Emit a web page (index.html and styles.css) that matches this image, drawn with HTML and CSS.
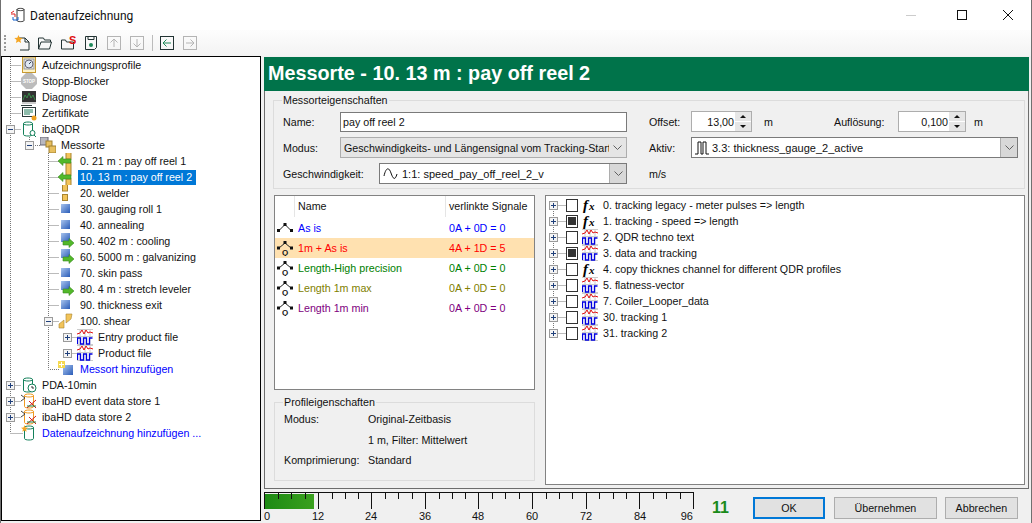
FILE: index.html
```html
<!DOCTYPE html>
<html lang="de">
<head>
  <meta charset="UTF-8" />
  <title>Datenaufzeichnung</title>
  <link rel="stylesheet" href="styles.css">
</head>
<body>
  <!-- shared icons -->
  <svg class="defs" width="0" height="0">
    <symbol id="i-app" viewBox="0 0 16 16"><path d="M7 2.500c0-1.500 7-1.500 7 0v11c0 1.500-7 1.500-7 0zM7 2.500c0 1.500 7 1.500 7 0" fill="#fff" stroke="#333"/><path d="M1 7h4v3M1 6l3-2" fill="none" stroke="#e02020"/><path d="M3 10v3h5v-3" fill="none" stroke="#1060d0"/></symbol>
    <symbol id="i-profile" viewBox="0 0 16 16"><rect x="1.500" y="0" width="13" height="15.500" fill="#fdf3c8" stroke="#c89a30"/><rect x="3" y="2" width="10" height="10" fill="#e6e6e6" stroke="#999"/><circle cx="8" cy="7" r="4" fill="#dfe8f4" stroke="#667"/><path d="M8 7l2-2" stroke="#345"/></symbol>
    <symbol id="i-stop" viewBox="0 0 16 16"><path d="M5 0h6l5 5v6l-5 5H5L0 11V5z" fill="#bcbcbc"/></symbol>
    <symbol id="i-diag" viewBox="0 0 16 16"><rect x="1" y="2" width="14" height="11" fill="#333"/><path d="M2 11l2-5 2 3 2-5 2 5 2-3 2 5" fill="none" stroke="#3a8a4a"/><path d="M1 14h14" stroke="#999"/></symbol>
    <symbol id="i-cert" viewBox="0 0 16 16"><rect x="1.500" y="2.500" width="13" height="9" fill="#fff" stroke="#2b3a3a"/><path d="M3 5h9M3 7h9M3 9h6" stroke="#1f7a5a"/><path d="M0 .5h11" stroke="#2b3a3a"/><circle cx="13" cy="13" r="2.500" fill="#f0a020"/></symbol>
    <symbol id="i-store-q" viewBox="0 0 16 16"><path d="M2.500 2.500c0-2 9-2 9 0v11c0 2-9 2-9 0zM2.500 2.500c0 2 9 2 9 0" fill="#fff" stroke="#13805a"/><circle cx="11.500" cy="12" r="2.500" fill="#fff" stroke="#13805a"/><path d="M13 14l2 2" stroke="#13805a"/></symbol>
    <symbol id="i-store-clock" viewBox="0 0 16 16"><path d="M2.500 2.500c0-2 9-2 9 0v11c0 2-9 2-9 0zM2.500 2.500c0 2 9 2 9 0" fill="#fff" stroke="#13805a"/><circle cx="11" cy="11" r="4" fill="#fff" stroke="#13805a"/><path d="M11 9v2h2" fill="none" stroke="#333"/></symbol>
    <symbol id="i-store-x" viewBox="0 0 16 16"><path d="M3.500 2.500c0-2 9-2 9 0v11c0 2-9 2-9 0zM3.500 2.500c0 2 9 2 9 0" fill="#fff" stroke="#f09a20"/><path d="M0 2l4 3-4 3" fill="none" stroke="#444"/><path d="M6 15l9-8M8 8l7 7" stroke="#d02020"/><path d="M6 13h9" stroke="#208040"/></symbol>
    <symbol id="i-store-add" viewBox="0 0 16 16"><path d="M3.500 2.500c0-2 9-2 9 0v11c0 2-9 2-9 0zM3.500 2.500c0 2 9 2 9 0" fill="#fff" stroke="#13805a"/><path d="M3.500 0l1 2.500 2.500.2-2 1.600.700 2.500-2.200-1.400-2.200 1.400.700-2.500-2-1.600 2.500-.2z" fill="#f5a623"/></symbol>
    <symbol id="i-group" viewBox="0 0 16 16"><rect x="0" y="0" width="8" height="8" fill="#b8b8c0" stroke="#667"/><rect x="6" y="4" width="6" height="6" fill="#e8c060" stroke="#a08030"/><rect x="9" y="9" width="7" height="7" fill="#e8c060" stroke="#a08030"/></symbol>
    <symbol id="i-in" viewBox="0 0 16 16"><rect x="8" y="-1" width="5" height="7" fill="#f2c45a" stroke="#a88430"/><rect x="8" y="10" width="5" height="7" fill="#f2c45a" stroke="#a88430"/><path d="M0 8l5-4.500v2.500h8v4H5v2.500z" fill="#52b82a" stroke="#3a8a20" stroke-width=".6"/></symbol>
    <symbol id="i-weld" viewBox="0 0 16 16"><rect x="4.500" y="-1" width="5" height="7" fill="#f2c45a" stroke="#a88430"/><rect x="4.500" y="9.500" width="5" height="6" fill="#f2c45a" stroke="#a88430"/></symbol>
    <symbol id="i-box" viewBox="0 0 16 16"><defs><linearGradient id="g-box" x2="1" y2="1"><stop offset="0" stop-color="#a8c4ee"/><stop offset="1" stop-color="#2a5cb8"/></linearGradient></defs><rect x="3" y="3" width="9" height="9" fill="url(#g-box)"/></symbol>
    <symbol id="i-out" viewBox="0 0 16 16"><rect x="3" y="0" width="9" height="9" fill="url(#g-box)"/><path d="M16 10l-5-4.500v2.500H5v4h6v2.500z" fill="#52b82a" stroke="#3a8a20" stroke-width=".6"/></symbol>
    <symbol id="i-shear" viewBox="0 0 16 16"><path d="M8 1h6l-1 5-5 4z" fill="#f2c45a" stroke="#a88430" stroke-width=".6"/><path d="M1 15V11l5-4v8z" fill="#f2c45a" stroke="#a88430" stroke-width=".6"/></symbol>
    <symbol id="i-signal" viewBox="0 0 16 16"><path d="M0 .5h16M0 7.500h16M0 15.500h16M3 0v16M8 0v16M13 0v16" stroke="#ccc"/><path d="M0 5l3-1 2-3 2 4 2-4 2 3 2-1 3 1" fill="none" stroke="#e01010"/><path d="M.5 15V9h3v6h3V9h3v6h3V9h3" fill="none" stroke="#0000e0" stroke-width="1.300"/></symbol>
    <symbol id="i-add" viewBox="0 0 16 16"><rect x="5" y="4" width="10" height="10" fill="url(#g-box)"/><path d="M0 0h7v7H0z" fill="#f5d950"/><path d="M1 3.500h5M3.500 1v5" stroke="#fff"/></symbol>
    <symbol id="i-node" viewBox="0 0 16 16"><path d="M2 10.500l6-6 6 6" fill="none" stroke="#222"/><rect x="0" y="9" width="3" height="3" fill="#111"/><rect x="6.500" y="3" width="3" height="3" fill="#111"/><rect x="13" y="9" width="3" height="3" fill="#111"/></symbol>
    <symbol id="i-node-q" viewBox="0 0 16 16"><path d="M2 8l6-5 6 5" fill="none" stroke="#222"/><rect x="0" y="6.500" width="3" height="3" fill="#111"/><rect x="6.500" y="1" width="3" height="3" fill="#111"/><rect x="13" y="6.500" width="3" height="3" fill="#111"/></symbol>
    <symbol id="i-plus" viewBox="0 0 9 9"><rect x=".5" y=".5" width="8" height="8" fill="#f4f4f4" stroke="#9a9a9a"/><path d="M2 4.500h5M4.500 2v5" stroke="#1f3f7a"/></symbol>
    <symbol id="i-minus" viewBox="0 0 9 9"><rect x=".5" y=".5" width="8" height="8" fill="#f4f4f4" stroke="#9a9a9a"/><path d="M2 4.500h5" stroke="#1f3f7a"/></symbol>
    <symbol id="i-chev" viewBox="0 0 9 5"><path d="M.5.500l4 4 4-4" fill="none" stroke="#606060"/></symbol>
  </svg>

  <div class="window">
    <header class="titlebar">
      <svg class="titlebar__icon" width="16" height="16"><use href="#i-app"/></svg>
      <span class="titlebar__text">Datenaufzeichnung</span>
      <div class="titlebar__controls">
        <svg width="10" height="10"><path d="M0 5.500h10" stroke="#ccc"/></svg>
        <svg width="10" height="10"><rect x=".5" y=".5" width="9" height="9" fill="none" stroke="#111"/></svg>
        <svg width="10" height="10"><path d="M0 0l10 10M10 0L0 10" stroke="#111"/></svg>
      </div>
    </header>

    <div class="toolbar">
      <span class="toolbar__grip"></span>
      <svg class="tool" width="16" height="16" viewBox="0 0 16 16"><path d="M5 3h6l4 4v8H6" fill="none" stroke="#233"/><path d="M11 3v4h4" fill="none" stroke="#233"/><path d="M4.500 0l1.200 2.800 3 .2-2.300 2 .7 3-2.600-1.600L1.900 8l.7-3L.3 3l3-.2z" fill="#f5a623"/></svg>
      <svg class="tool" width="16" height="16" viewBox="0 0 16 16"><path d="M1.500 14V3h5l1 2h6v2M1.500 14h11l2-7H4z" fill="none" stroke="#233"/></svg>
      <svg class="tool" width="16" height="16" viewBox="0 0 16 16"><path d="M1.500 14V5h4l1 2h7v7z" fill="none" stroke="#233"/><text x="9" y="9" class="tool__s">S</text></svg>
      <svg class="tool" width="16" height="16" viewBox="0 0 16 16"><path d="M2.500 1.500h11v11l-2 2h-9z" fill="none" stroke="#233"/><path d="M5 1.500v3h6v-3" fill="none" stroke="#233"/><circle cx="8" cy="10" r="2" fill="#1f8a5a"/></svg>
      <svg class="tool" width="16" height="16" viewBox="0 0 16 16"><rect x="1.500" y="1.500" width="13" height="13" fill="none" stroke="#b4b4b4"/><path d="M8 12V4M4.500 7.500L8 4l3.500 3.500" fill="none" stroke="#b4b4b4"/></svg>
      <svg class="tool" width="16" height="16" viewBox="0 0 16 16"><rect x="1.500" y="1.500" width="13" height="13" fill="none" stroke="#b4b4b4"/><path d="M8 4v8M4.500 8.500L8 12l3.500-3.500" fill="none" stroke="#b4b4b4"/></svg>
      <span class="toolbar__sep"></span>
      <svg class="tool" width="16" height="16" viewBox="0 0 16 16"><rect x="1.500" y="1.500" width="13" height="13" fill="none" stroke="#233"/><path d="M12 8H4M7.500 4.500L4 8l3.500 3.500" fill="none" stroke="#1f8a5a"/></svg>
      <svg class="tool" width="16" height="16" viewBox="0 0 16 16"><rect x="1.500" y="1.500" width="13" height="13" fill="none" stroke="#b4b4b4"/><path d="M4 8h8M8.500 4.500L12 8l-3.500 3.500" fill="none" stroke="#b4b4b4"/></svg>
    </div>

    <div class="main">
      <nav class="tree">
        <!-- dotted connectors and expanders, in page coordinates -->
        <svg class="tree__lines" width="258" height="464" viewBox="2 57 258 464">
          <path class="dots" d="M10.500 57V433M10.500 65.500H21M10.500 81.500H21M10.500 97.500H21M10.500 113.500H21M10.500 129.500H21M10.500 385.500H21M10.500 401.500H21M10.500 417.500H21M10.500 433.500H23M29.500 137V145.500H41M48.500 153V369.500H59M48.500 161.500H59M48.500 177.500H59M48.500 193.500H59M48.500 209.500H59M48.500 225.500H59M48.500 241.500H59M48.500 257.500H59M48.500 273.500H59M48.500 289.500H59M48.500 305.500H59M48.500 321.500H59M67.500 337.500H78M67.500 353.500H78"/>
          <use href="#i-minus" x="6" y="125" width="9" height="9"/>
          <use href="#i-minus" x="25" y="141" width="9" height="9"/>
          <use href="#i-minus" x="44" y="317" width="9" height="9"/>
          <use href="#i-plus" x="63" y="333" width="9" height="9"/>
          <use href="#i-plus" x="63" y="349" width="9" height="9"/>
          <use href="#i-plus" x="6" y="381" width="9" height="9"/>
          <use href="#i-plus" x="6" y="397" width="9" height="9"/>
          <use href="#i-plus" x="6" y="413" width="9" height="9"/>
        </svg>
        <div class="node lv0"><svg class="ico"><use href="#i-profile"/></svg><span class="node__text">Aufzeichnungsprofile</span></div>
        <div class="node lv0"><svg class="ico" viewBox="0 0 16 16"><use href="#i-stop" width="16" height="16"/><text x="8" y="10" text-anchor="middle" class="i-stop-text">STOP</text></svg><span class="node__text">Stopp-Blocker</span></div>
        <div class="node lv0"><svg class="ico"><use href="#i-diag"/></svg><span class="node__text">Diagnose</span></div>
        <div class="node lv0"><svg class="ico"><use href="#i-cert"/></svg><span class="node__text">Zertifikate</span></div>
        <div class="node lv0"><svg class="ico"><use href="#i-store-q"/></svg><span class="node__text">ibaQDR</span></div>
        <div class="node lv1"><svg class="ico"><use href="#i-group"/></svg><span class="node__text">Messorte</span></div>
        <div class="node lv2"><svg class="ico"><use href="#i-in"/></svg><span class="node__text">0. 21 m : pay off reel 1</span></div>
        <div class="node lv2"><svg class="ico"><use href="#i-in"/></svg><span class="node__text node__text--sel">10. 13 m : pay off reel 2</span></div>
        <div class="node lv2"><svg class="ico"><use href="#i-weld"/></svg><span class="node__text">20. welder</span></div>
        <div class="node lv2"><svg class="ico"><use href="#i-box"/></svg><span class="node__text">30. gauging roll 1</span></div>
        <div class="node lv2"><svg class="ico"><use href="#i-box"/></svg><span class="node__text">40. annealing</span></div>
        <div class="node lv2"><svg class="ico"><use href="#i-out"/></svg><span class="node__text">50. 402 m : cooling</span></div>
        <div class="node lv2"><svg class="ico"><use href="#i-out"/></svg><span class="node__text">60. 5000 m : galvanizing</span></div>
        <div class="node lv2"><svg class="ico"><use href="#i-box"/></svg><span class="node__text">70. skin pass</span></div>
        <div class="node lv2"><svg class="ico"><use href="#i-out"/></svg><span class="node__text">80. 4 m : stretch leveler</span></div>
        <div class="node lv2"><svg class="ico"><use href="#i-box"/></svg><span class="node__text">90. thickness exit</span></div>
        <div class="node lv2"><svg class="ico"><use href="#i-shear"/></svg><span class="node__text">100. shear</span></div>
        <div class="node lv3"><svg class="ico"><use href="#i-signal"/></svg><span class="node__text">Entry product file</span></div>
        <div class="node lv3"><svg class="ico"><use href="#i-signal"/></svg><span class="node__text">Product file</span></div>
        <div class="node lv2"><svg class="ico"><use href="#i-add"/></svg><span class="node__text node__text--link">Messort hinzufügen</span></div>
        <div class="node lv0"><svg class="ico"><use href="#i-store-clock"/></svg><span class="node__text">PDA-10min</span></div>
        <div class="node lv0"><svg class="ico"><use href="#i-store-x"/></svg><span class="node__text">ibaHD event data store 1</span></div>
        <div class="node lv0"><svg class="ico"><use href="#i-store-x"/></svg><span class="node__text">ibaHD data store 2</span></div>
        <div class="node lv0"><svg class="ico"><use href="#i-store-add"/></svg><span class="node__text node__text--link">Datenaufzeichnung hinzufügen ...</span></div>
      </nav>

      <div class="side">
        <section class="panel">
          <h1 class="panel__title">Messorte - 10. 13 m : pay off reel 2</h1>
          <div class="panel__body">
            <fieldset class="group group--place">
              <legend>Messorteigenschaften</legend>
              <div class="form-row">
                <label class="lbl lbl--name">Name:</label>
                <input class="field field--name" type="text" value="pay off reel 2">
                <label class="lbl lbl--offset">Offset:</label>
                <div class="spin spin--offset"><input class="spin__val" type="text" value="13,00"><span class="spin__btns"><i class="up"></i><i class="down"></i></span></div>
                <span class="unit unit--offset">m</span>
                <label class="lbl lbl--res">Auflösung:</label>
                <div class="spin spin--res"><input class="spin__val" type="text" value="0,100"><span class="spin__btns"><i class="up"></i><i class="down"></i></span></div>
                <span class="unit unit--res">m</span>
              </div>
              <div class="form-row">
                <label class="lbl lbl--name">Modus:</label>
                <div class="combo combo--flat combo--modus"><span class="combo__text">Geschwindigkeits- und Längensignal vom Tracking-Start</span><span class="combo__btn"><svg width="9" height="5"><use href="#i-chev"/></svg></span></div>
                <label class="lbl lbl--offset">Aktiv:</label>
                <div class="combo combo--aktiv"><svg class="combo__sig" width="14" height="14" viewBox="0 0 14 14"><path d="M0 13h3V1h3v12h2V1h3v12h3" fill="none" stroke="#111"/></svg><span class="combo__text">3.3: thickness_gauge_2_active</span><span class="combo__btn"><svg width="9" height="5"><use href="#i-chev"/></svg></span></div>
              </div>
              <div class="form-row">
                <label class="lbl lbl--speed">Geschwindigkeit:</label>
                <div class="combo combo--speed"><svg class="combo__sig" width="16" height="14" viewBox="0 0 16 14"><path d="M1 9C3 0 6 0 8 6s4 8 6 1" fill="none" stroke="#111"/></svg><span class="combo__text">1:1: speed_pay_off_reel_2_v</span><span class="combo__btn"><svg width="9" height="5"><use href="#i-chev"/></svg></span></div>
                <span class="unit unit--speed">m/s</span>
              </div>
            </fieldset>

            <div class="columns">
              <div class="col-left">
                <div class="list">
                  <div class="list__head"><span class="list__c0"></span><span class="list__c1">Name</span><span class="list__c2">verlinkte Signale</span></div>
                  <div class="list__row c-blue"><svg class="ico"><use href="#i-node"/></svg><span class="list__c1">As is</span><span class="list__c2">0A + 0D = 0</span></div>
                  <div class="list__row list__row--on c-red"><svg class="ico" viewBox="0 0 16 16"><use href="#i-node-q" width="16" height="16"/><text x="8" y="14.500" text-anchor="middle" class="i-node-text">Q</text></svg><span class="list__c1">1m + As is</span><span class="list__c2">4A + 1D = 5</span></div>
                  <div class="list__row c-green"><svg class="ico" viewBox="0 0 16 16"><use href="#i-node-q" width="16" height="16"/><text x="8" y="14.500" text-anchor="middle" class="i-node-text">Q</text></svg><span class="list__c1">Length-High precision</span><span class="list__c2">0A + 0D = 0</span></div>
                  <div class="list__row c-olive"><svg class="ico" viewBox="0 0 16 16"><use href="#i-node-q" width="16" height="16"/><text x="8" y="14.500" text-anchor="middle" class="i-node-text">Q</text></svg><span class="list__c1">Length 1m max</span><span class="list__c2">0A + 0D = 0</span></div>
                  <div class="list__row c-purple"><svg class="ico" viewBox="0 0 16 16"><use href="#i-node-q" width="16" height="16"/><text x="8" y="14.500" text-anchor="middle" class="i-node-text">Q</text></svg><span class="list__c1">Length 1m min</span><span class="list__c2">0A + 0D = 0</span></div>
                </div>
                <fieldset class="group group--profile">
                  <legend>Profileigenschaften</legend>
                  <div class="prop prop--first"><span class="prop__k">Modus:</span><span>Original-Zeitbasis</span></div>
                  <div class="prop"><span class="prop__k"></span><span>1 m, Filter: Mittelwert</span></div>
                  <div class="prop prop--last"><span class="prop__k">Komprimierung:</span><span>Standard</span></div>
                </fieldset>
              </div>

              <div class="signals">
                <svg class="signals__lines" width="20" height="160" viewBox="0 0 20 160">
                  <path class="dots" d="M7.500 10V138M7.500 10.500H20M7.500 26.500H20M7.500 42.500H20M7.500 58.500H20M7.500 74.500H20M7.500 90.500H20M7.500 106.500H20M7.500 122.500H20M7.500 138.500H20"/>
                  <use href="#i-plus" x="3" y="6" width="9" height="9"/><use href="#i-plus" x="3" y="22" width="9" height="9"/><use href="#i-plus" x="3" y="38" width="9" height="9"/><use href="#i-plus" x="3" y="54" width="9" height="9"/><use href="#i-plus" x="3" y="70" width="9" height="9"/><use href="#i-plus" x="3" y="86" width="9" height="9"/><use href="#i-plus" x="3" y="102" width="9" height="9"/><use href="#i-plus" x="3" y="118" width="9" height="9"/><use href="#i-plus" x="3" y="134" width="9" height="9"/>
                </svg>
                <div class="sig"><i class="check"></i><svg class="ico" viewBox="0 0 16 16"><text x="1" y="13" class="i-fx-f">f</text><text x="7" y="13" class="i-fx-x">x</text></svg><span>0. tracking legacy - meter pulses =&gt; length</span></div>
                <div class="sig"><i class="check check--on"></i><svg class="ico" viewBox="0 0 16 16"><text x="1" y="13" class="i-fx-f">f</text><text x="7" y="13" class="i-fx-x">x</text></svg><span>1. tracking - speed =&gt; length</span></div>
                <div class="sig"><i class="check"></i><svg class="ico"><use href="#i-signal"/></svg><span>2. QDR techno text</span></div>
                <div class="sig"><i class="check check--on"></i><svg class="ico"><use href="#i-signal"/></svg><span>3. data and tracking</span></div>
                <div class="sig"><i class="check"></i><svg class="ico" viewBox="0 0 16 16"><text x="1" y="13" class="i-fx-f">f</text><text x="7" y="13" class="i-fx-x">x</text></svg><span>4. copy thicknes channel for different QDR profiles</span></div>
                <div class="sig"><i class="check"></i><svg class="ico"><use href="#i-signal"/></svg><span>5. flatness-vector</span></div>
                <div class="sig"><i class="check"></i><svg class="ico"><use href="#i-signal"/></svg><span>7. Coiler_Looper_data</span></div>
                <div class="sig"><i class="check"></i><svg class="ico"><use href="#i-signal"/></svg><span>30. tracking 1</span></div>
                <div class="sig"><i class="check"></i><svg class="ico"><use href="#i-signal"/></svg><span>31. tracking 2</span></div>
              </div>
            </div>
          </div>
        </section>

        <footer class="footer">
          <svg class="meter" width="434" height="33" viewBox="264 490 434 33">
            <defs><linearGradient id="g-meter"><stop offset="0" stop-color="#1c8a14"/><stop offset="1" stop-color="#3aa01e"/></linearGradient></defs>
            <rect x="264" y="494" width="50" height="15" fill="url(#g-meter)"/>
            <path class="meter__ticks" d="M264 492.500H693M264.500 492V509M278.500 493V499M291.500 493V499M305.500 493V499M318.500 492V509M332.500 493V499M345.500 493V499M358.500 493V499M371.500 492V509M385.500 493V499M398.500 493V499M412.500 493V499M425.500 492V509M439.500 493V499M452.500 493V499M465.500 493V499M478.500 492V509M492.500 493V499M505.500 493V499M519.500 493V499M532.500 492V509M546.500 493V499M559.500 493V499M572.500 493V499M586.500 492V509M599.500 493V499M613.500 493V499M626.500 493V499M639.500 492V509M653.500 493V499M666.500 493V499M680.500 493V499M693.500 492V509"/>
            <text x="264" y="520" class="meter__num">0</text>
            <text x="318" y="520" text-anchor="middle" class="meter__num">12</text>
            <text x="371" y="520" text-anchor="middle" class="meter__num">24</text>
            <text x="425" y="520" text-anchor="middle" class="meter__num">36</text>
            <text x="478" y="520" text-anchor="middle" class="meter__num">48</text>
            <text x="532" y="520" text-anchor="middle" class="meter__num">60</text>
            <text x="586" y="520" text-anchor="middle" class="meter__num">72</text>
            <text x="640" y="520" text-anchor="middle" class="meter__num">84</text>
            <text x="693" y="520" text-anchor="end" class="meter__num">96</text>
          </svg>
          <span class="count">11</span>
          <button class="btn btn--ok">OK</button>
          <button class="btn btn--apply">Übernehmen</button>
          <button class="btn btn--cancel">Abbrechen</button>
        </footer>
      </div>
    </div>
  </div>
</body>
</html>
```

FILE: styles.css
```css
*{margin:0;padding:0;box-sizing:border-box;}
html,body{width:1032px;height:523px;overflow:hidden;}
body{font-family:"Liberation Sans",Arial,sans-serif;font-size:10.700px;color:#111;background:#f0f0f0;}
.defs{position:absolute;}
.window{height:523px;display:flex;flex-direction:column;border:solid #707070;border-width:0 1px;}

/* title + toolbar */
.titlebar{height:30px;background:#fff;display:flex;align-items:center;padding-left:9px;flex:none;}
.titlebar__icon{flex:none;}
.titlebar__text{margin:1px 0 0 4px;font:12px Roboto,sans-serif;}
.titlebar__controls{margin-left:auto;display:flex;gap:41px;padding-right:18px;}
.titlebar__controls svg:last-child{margin-left:-5px;}
.toolbar{height:26px;flex:none;display:flex;align-items:center;padding-left:3px;background:linear-gradient(#fdfdfd,#f3f3f3);}
.toolbar__grip{width:2px;height:16px;margin-right:8px;border-left:2px dotted #999;}
.tool{margin-right:7px;flex:none;}
.tool__s{font:bold 11px "Liberation Sans",sans-serif;fill:#e01010;}
.toolbar__sep{width:1px;height:16px;background:#bbb;margin:0 6px 0 0;}

.main{flex:1;display:flex;min-height:0;}
.dots{fill:none;stroke:#777;stroke-dasharray:1 1;}

/* left tree */
.tree{width:260px;flex:none;background:#fff;border:1px solid #000;height:465px;position:relative;}
.tree__lines{position:absolute;left:0;top:0;}
.node{height:16px;display:flex;align-items:center;position:relative;white-space:nowrap;}
.ico{width:16px;height:16px;flex:none;}
.lv0{padding-left:19px;}
.lv1{padding-left:38px;}
.lv2{padding-left:56px;}
.lv3{padding-left:75px;}
.lv0 .ico{margin-right:3px;}
.lv1 .ico{margin-right:3px;}
.lv2 .ico{margin-right:4px;}
.lv3 .ico{margin-right:3px;}
.node__text{padding:0 2px;line-height:15px;}
.node__text--sel{background:#0078d7;color:#fff;width:118px;}
.node__text--link{color:#0000ff;}
.i-stop-text{font:bold 4.500px "Liberation Sans",sans-serif;fill:#fff;}
.i-fx-f{font:italic bold 15px "Liberation Serif",serif;fill:#000;}
.i-fx-x{font:italic bold 11px "Liberation Serif",serif;fill:#000;}
.i-node-text{font:bold 8px "Liberation Sans",sans-serif;fill:#111;}

/* right panel */
.side{flex:1;display:flex;flex-direction:column;min-width:0;padding-left:3px;}
.panel{height:432px;margin-right:2px;border:1px solid #6d6d6d;border-top:0;margin-top:1px;flex:none;}
.panel__title{height:34px;background:#00734a;color:#fff;font:bold 19.800px/33px "Liberation Sans",sans-serif;padding-left:4px;margin-left:-1px;margin-right:-1px;}
.panel__body{padding:0 3px 0 8px;}

.group{border:1px solid #dcdcdc;}
.group legend{margin-left:-1px;padding:0 1px;line-height:13px;}
.group--place{height:95px;margin-top:3px;padding:4px 0 0 9px;}
.form-row{display:flex;align-items:center;margin-bottom:5px;height:21px;}
.lbl{flex:none;}
.lbl--name{width:57px;}
.lbl--offset{width:42px;margin-left:22px;}
.lbl--speed{width:96px;}
.lbl--res{width:64px;}
.field{height:20px;border:1px solid #7a7a7a;background:#fff;font:inherit;color:inherit;padding-left:2px;outline:none;}
.field--name{width:287px;}
.spin{height:21px;border:1px solid #adadad;background:#fff;display:flex;}
.spin--offset{width:61px;}
.spin--res{width:68px;}
.spin__val{flex:1;width:0;border:0;outline:none;background:none;font:inherit;color:inherit;text-align:right;padding-right:1px;}
.spin__btns{width:16px;display:flex;flex-direction:column;gap:1px;}
.spin__btns i{flex:1;background:#e6e6e6;position:relative;}
.spin__btns i::after{content:"";position:absolute;left:5px;border:3px solid transparent;border-top:0;border-bottom:3px solid #111;top:3px;}
.spin__btns i.down::after{transform:scaleY(-1);}
.unit{margin-left:12px;}
.unit--offset{width:70px;flex:none;}
.unit--res{margin-left:8px;}
.unit--speed{margin-left:22px;}
.combo{height:21px;border:1px solid #7a7a7a;background:#fff;display:flex;align-items:center;overflow:hidden;}
.combo__sig{margin-left:3px;flex:none;}
.combo__text{flex:1;min-width:0;white-space:nowrap;overflow:hidden;padding-left:3px;}
.combo__btn{width:17px;height:100%;flex:none;background:#d8d8d8;border-left:1px solid #adadad;display:flex;align-items:center;justify-content:center;}
.combo--flat{background:#e5e5e5;border-color:#adadad;}
.combo--flat .combo__btn{background:none;border:0;}
.combo--modus{width:287px;}
.combo--aktiv{width:327px;font-size:11px;}
.combo--speed{width:248px;font-size:11px;}

.columns{display:flex;gap:10px;margin-top:6px;}
.col-left{width:261px;flex:none;margin-left:1px;}
.list{height:195px;background:#fff;border:1px solid #828282;}
.list__head{height:22px;display:flex;align-items:flex-start;}
.list__head .list__c0{width:20px;height:21px;flex:none;border-right:1px solid #e5e5e5;}
.list__head .list__c1{padding-left:3px;width:151px;height:21px;line-height:21px;border-right:1px solid #e5e5e5;}
.list__head .list__c2{padding-left:3px;line-height:21px;white-space:nowrap;}
.list__row{height:20px;display:flex;align-items:center;padding-left:2px;}
.list__row .ico{margin-right:5px;}
.list__row .list__c1{width:151px;flex:none;}
.list__row--on{background:#ffe1b0;}
.c-blue{color:#0000ff;}
.c-red{color:#ff0000;}
.c-green{color:#008000;}
.c-olive{color:#808000;}
.c-purple{color:#800080;}
.group--profile{height:85px;margin-top:6px;padding:0 0 0 9px;}
.prop{display:flex;height:21px;align-items:center;}
.prop--first{margin-top:-1px;}
.prop--last{margin-top:-1px;}
.prop__k{width:84px;flex:none;}

.signals{flex:1;height:290px;background:#fff;border:1px solid #828282;position:relative;padding:1px 0 0 20px;}
.signals__lines{position:absolute;left:0;top:-1px;}
.sig{height:16px;display:flex;align-items:center;position:relative;white-space:nowrap;}
.sig .ico{margin-right:5px;}
.check{width:12px;height:13px;flex:none;margin-right:4px;border:1px solid #333;background:#fff;display:flex;align-items:center;justify-content:center;}
.check--on::after{content:"";width:8px;height:8px;background:#333;}

/* bottom bar */
.footer{flex:1;display:flex;align-items:flex-start;position:relative;}
.meter{flex:none;margin-top:1px;}
.meter__ticks{fill:none;stroke:#111;}
.meter__num{font:11px "Liberation Sans",sans-serif;fill:#111;}
.count{font:bold 16px/20px "Liberation Sans",sans-serif;color:#1a8a1a;margin:9px 0 0 14px;}
.btn{height:22px;margin-top:8px;border:1px solid #adadad;background:#e1e1e1;font:inherit;color:#111;}
.btn--ok{width:72px;margin-left:24px;border:2px solid #0078d7;}
.btn--apply{width:103px;margin-left:9px;}
.btn--cancel{width:73px;margin-left:8px;}
```
